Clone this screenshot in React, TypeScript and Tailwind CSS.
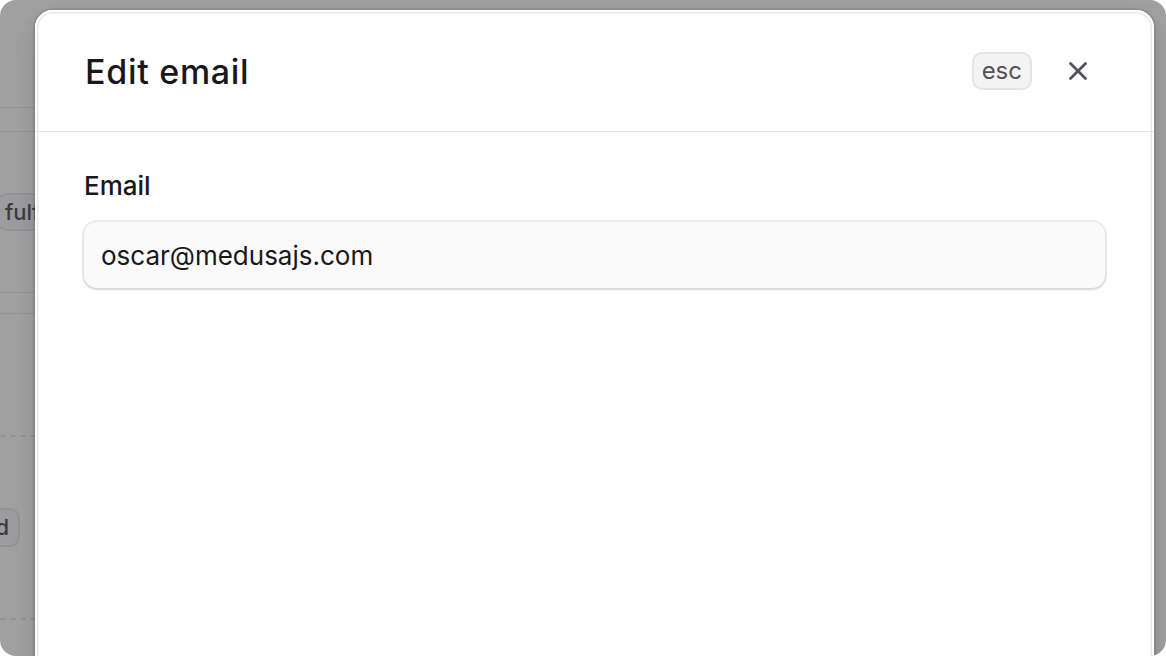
import React from "react";

function XMark() {
  return (
    <svg width="30" height="30" viewBox="0 0 15 15" fill="none">
      <path
        d="M11.25 3.75L3.75 11.25M3.75 3.75L11.25 11.25"
        stroke="currentColor"
        strokeWidth="1.4"
        strokeLinecap="round"
        strokeLinejoin="round"
      />
    </svg>
  );
}

// the order page that sits under the overlay, only a sliver of it shows
function PageBehind() {
  return (
    <div className="flex w-[400px] flex-col text-[#52525b]">
      <div className="h-[108px] border-b border-[#e4e4e7]" />
      <div className="h-[24px] border-b border-[#e4e4e7]" />
      <div className="h-[161px] border-b border-[#e4e4e7] pt-[61px]">
        <span className="-ml-[3px] inline-flex h-[38px] items-center rounded-[10px] border-2 border-[#e4e4e7] bg-[#f4f4f5] px-[6px] text-[22px] font-medium">
          fulfilled
        </span>
      </div>
      <div className="h-[21px] border-b border-[#e4e4e7]" />
      <div className="h-[123px] border-b-2 border-dashed border-[#e4e4e7]" />
      <div className="h-[183px] border-b-2 border-dashed border-[#e4e4e7] pt-[71px]">
        <div className="flex w-[20px] justify-end">
          <span className="inline-flex h-[39px] shrink-0 items-center rounded-[10px] border-2 border-[#e4e4e7] bg-[#f4f4f5] px-[9px] text-[22px] font-medium">
            Paid
          </span>
        </div>
      </div>
    </div>
  );
}

export default function App() {
  return (
    <div className="h-[656px] w-[1166px] bg-white font-['Inter','Noto_Sans',sans-serif]">
      <div className="relative h-full w-full overflow-hidden rounded-[16px] bg-[#fafafa]">
        <PageBehind />
        <div className="absolute inset-0 bg-[rgba(24,24,27,0.4)]" />

        <div className="absolute bottom-[-30px] left-[35px] right-[12px] top-[10px] flex flex-col rounded-[18px] bg-white shadow-[inset_0_0_0_2px_#ffffff,inset_0_0_0_3.5px_rgba(228,228,231,0.8),0_0_0_2px_rgba(0,0,0,0.08),0_8px_16px_rgba(0,0,0,0.08),0_16px_32px_rgba(0,0,0,0.08)]">
          <div className="flex h-[122px] items-center justify-between border-b-[1.5px] border-[#e4e4e7] pl-[50px] pr-[48px]">
            <h2 className="pt-[2px] text-[34px] font-medium leading-[48px] tracking-[0.7px] text-[#18181b]">Edit email</h2>
            <div className="flex items-center gap-x-[18px]">
              <kbd className="inline-flex h-[38px] items-center justify-center rounded-[10px] border-2 border-[#e4e4e7] bg-[#f4f4f5] px-[8px] font-['Inter',sans-serif] text-[24px] font-normal text-[#52525b]">
                esc
              </kbd>
              <button className="flex h-[56px] w-[56px] items-center justify-center rounded-[12px] text-[#52525b]">
                <XMark />
              </button>
            </div>
          </div>

          <div className="flex flex-col gap-y-[16px] px-[49px] pt-[34px]">
            <label className="text-[26px] font-medium leading-[40px] text-[#18181b]">Email</label>
            <input
              readOnly
              defaultValue="oscar@medusajs.com"
              className="h-[66px] w-full rounded-[13px] bg-[#fafafa] px-[17px] text-[26px] text-[#18181b] shadow-[0_0_0_2px_rgba(0,0,0,0.07),0_2px_3px_rgba(0,0,0,0.1)] outline-none"
            />
          </div>
        </div>
      </div>
    </div>
  );
}
